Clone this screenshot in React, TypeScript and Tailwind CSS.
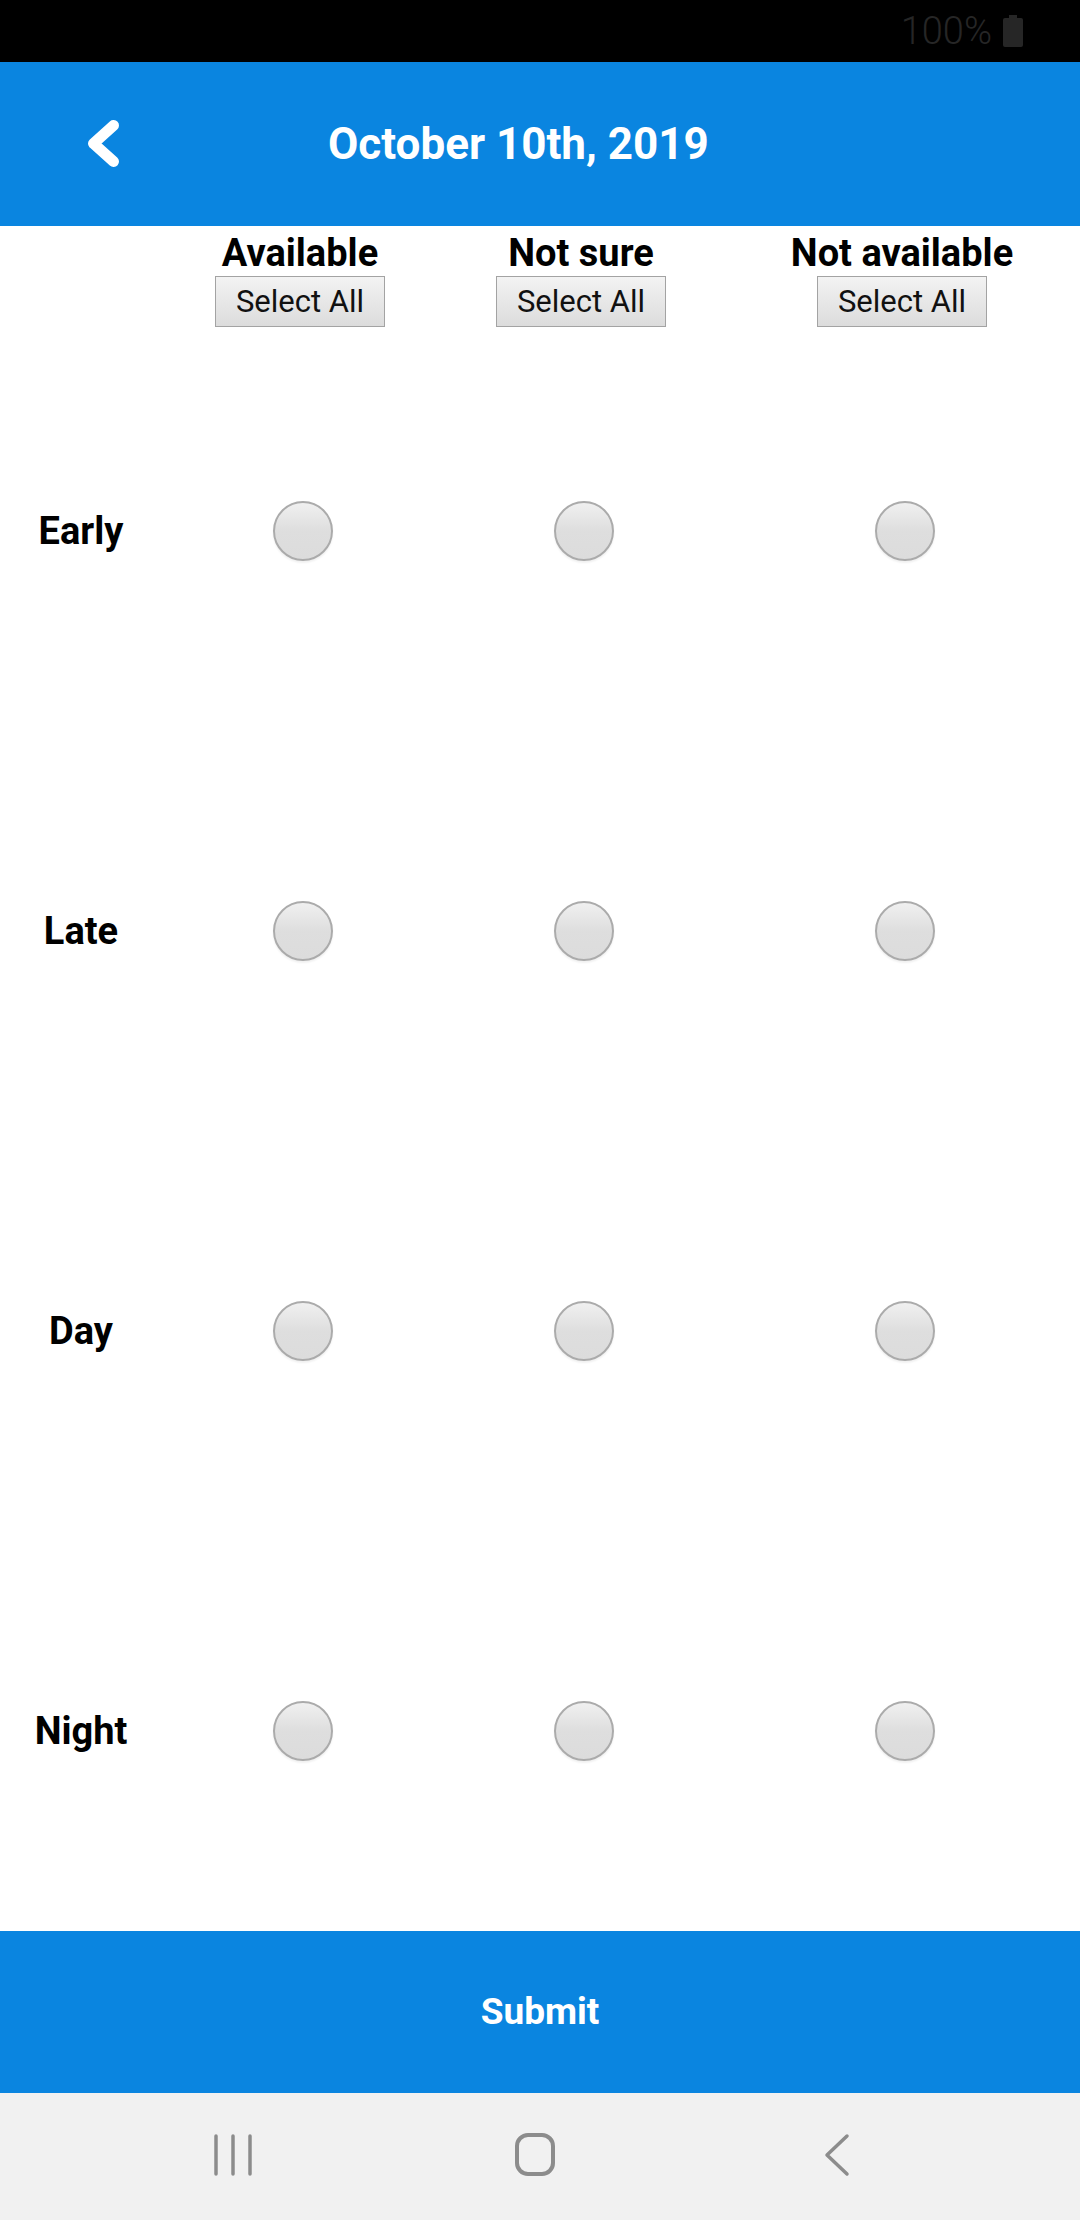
import React from "react";

const rows = ["Early", "Late", "Day", "Night"];
const cols = ["Available", "Not sure", "Not available"];

function Radio() {
  return (
    <div className="ml-[5px] w-[60px] h-[60px] rounded-full border-2 border-[#ababab] bg-gradient-to-b from-[#f0f0f0] via-[#dedede] to-[#dcdcdc] shadow-[0_2px_2px_rgba(0,0,0,0.06)]" />
  );
}

export default function App() {
  return (
    <div className="w-[1080px] h-[2220px] flex flex-col bg-white overflow-hidden" style={{ fontFamily: "Roboto, 'Noto Sans', sans-serif" }}>
      {/* status bar */}
      <div className="h-[62px] bg-black flex items-center justify-end pr-[56px] shrink-0">
        <span className="text-[38px] font-light text-[#262626] leading-none">100%</span>
        <svg width="22" height="32" viewBox="0 0 22 32" className="ml-[10px]">
          <rect x="7" y="0" width="8" height="4" fill="#262626" />
          <rect x="1" y="3" width="20" height="29" rx="2" fill="#262626" />
        </svg>
      </div>

      {/* header */}
      <div className="h-[164px] bg-[#0a85e0] flex items-center shrink-0">
        <svg width="40" height="56" viewBox="0 0 40 56" className="ml-[84px]">
          <polyline points="29.5,9.5 9.5,27.5 29.5,45.5" fill="none" stroke="white" strokeWidth="11" strokeLinecap="round" strokeLinejoin="round" />
        </svg>
        <div className="ml-[204px] text-white font-bold text-[44px] leading-none">October 10th, 2019</div>
      </div>

      {/* column headers */}
      <div className="grid grid-cols-[162px_276px_286px_356px] h-[105px] pt-[5px] shrink-0">
        <div />
        {cols.map((c) => (
          <div key={c} className="flex flex-col items-center">
            <div className="text-[38px] font-bold leading-[45px] text-black">{c}</div>
            <button className="w-[170px] h-[51px] border border-[#a3a3a3] bg-gradient-to-b from-[#f3f3f3] to-[#dcdcdc] text-[31px] text-[#111] leading-none">
              Select All
            </button>
          </div>
        ))}
      </div>

      {/* rows */}
      <div className="flex flex-col shrink-0">
        {rows.map((r) => (
          <div key={r} className="grid grid-cols-[162px_276px_286px_356px] h-[400px] items-center">
            <div className="text-center text-[38px] font-bold text-black">{r}</div>
            {cols.map((c) => (
              <div key={c} className="flex justify-center">
                <Radio />
              </div>
            ))}
          </div>
        ))}
      </div>

      {/* submit */}
      <div className="h-[162px] bg-[#0a85e0] flex items-center justify-center shrink-0">
        <span className="text-white font-bold text-[37px]">Submit</span>
      </div>

      {/* nav bar */}
      <div className="flex-1 bg-[#f1f1f1] relative">
        <svg width="1080" height="127" viewBox="0 0 1080 127" className="block">
          <g stroke="#8c8c8c" strokeWidth="3.5" strokeLinecap="round" fill="none">
            <line x1="216" y1="43" x2="216" y2="81" />
            <line x1="233" y1="43" x2="233" y2="81" />
            <line x1="250" y1="43" x2="250" y2="81" />
            <rect x="517" y="42" width="36" height="39" rx="11" strokeWidth="4" />
            <polyline points="847,43 827,62 847,81" strokeLinejoin="round" />
          </g>
        </svg>
      </div>
    </div>
  );
}
